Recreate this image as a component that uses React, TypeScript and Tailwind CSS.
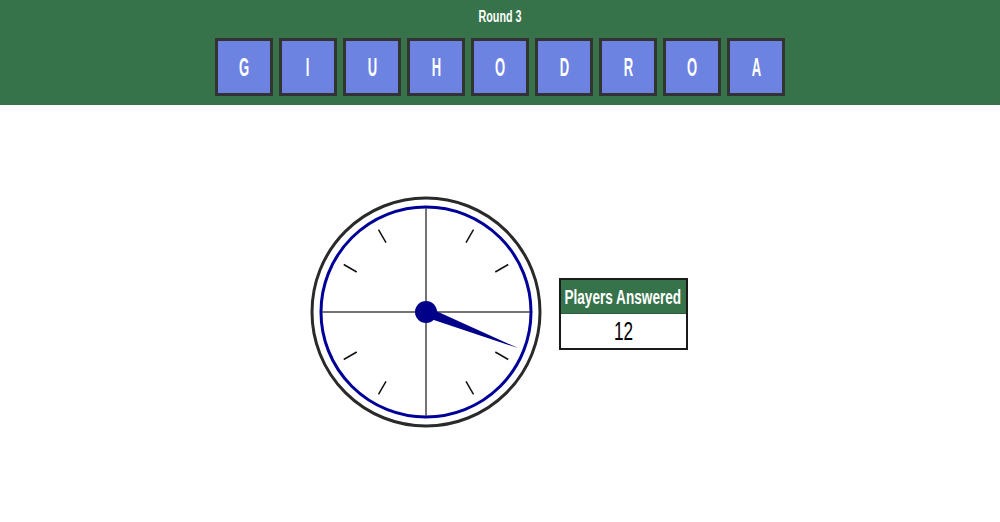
const letters = ['G', 'I', 'U', 'H', 'O', 'D', 'R', 'O', 'A'];

const font = { fontFamily: '"Liberation Sans", Arial, sans-serif' };

function Clock() {
  const c = 118;
  const ticks = [30, 60, 120, 150, 210, 240, 300, 330];
  return (
    <svg width="236" height="236" viewBox="0 0 236 236">
      <circle cx={c} cy={c} r={114} fill="white" stroke="#2a2a2a" strokeWidth="3" />
      <circle cx={c} cy={c} r={105} fill="white" stroke="#000099" strokeWidth="3" />
      <line x1={c} y1={c - 104} x2={c} y2={c + 104} stroke="#444" strokeWidth="1.5" />
      <line x1={c - 104} y1={c} x2={c + 104} y2={c} stroke="#444" strokeWidth="1.5" />
      {ticks.map((a) => {
        const r = (a * Math.PI) / 180;
        const s = Math.sin(r);
        const k = -Math.cos(r);
        return (
          <line
            key={a}
            x1={c + s * 80}
            y1={c + k * 80}
            x2={c + s * 95}
            y2={c + k * 95}
            stroke="#111"
            strokeWidth="1.5"
          />
        );
      })}
      <g transform={`translate(${c} ${c}) rotate(111.4)`}>
        <polygon points="-5,0 5,0 0,-99" fill="#000088" />
      </g>
      <circle cx={c} cy={c} r={11} fill="#000088" />
    </svg>
  );
}

export default function App() {
  return (
    <div className="min-h-[522px] bg-white flex flex-col" style={font}>
      <div className="h-[105px] bg-[#37734a] flex flex-col items-center pt-[7px]">
        <div className="text-white font-bold text-[16px] leading-[20px] whitespace-nowrap">
          <span className="inline-block scale-x-[0.67]">Round 3</span>
        </div>
        <div className="flex gap-[6px] mt-[11px]">
          {letters.map((l, i) => (
            <div
              key={i}
              className="w-[58px] h-[58px] bg-[#6c83e2] border-[3px] border-[#333333] flex items-center justify-center text-white text-[26px] font-bold leading-none"
            >
              <span className="inline-block scale-x-[0.5]">{l}</span>
            </div>
          ))}
        </div>
      </div>
      <div className="flex-1 flex items-center justify-center gap-[15px] pb-[4px] pr-[5px]">
        <Clock />
        <div className="w-[129px] mt-[5px] border-[2px] border-[#1a1a1a] flex flex-col">
          <div className="h-[33px] bg-[#37734a] text-white font-bold text-[20px] flex items-center justify-center whitespace-nowrap">
            <span className="inline-block scale-x-[0.68]">Players Answered</span>
          </div>
          <div className="h-[35px] bg-white text-black text-[26px] flex items-center justify-center border-t border-[#2b5c3a]">
            <span className="inline-block scale-x-[0.66]">12</span>
          </div>
        </div>
      </div>
    </div>
  );
}
